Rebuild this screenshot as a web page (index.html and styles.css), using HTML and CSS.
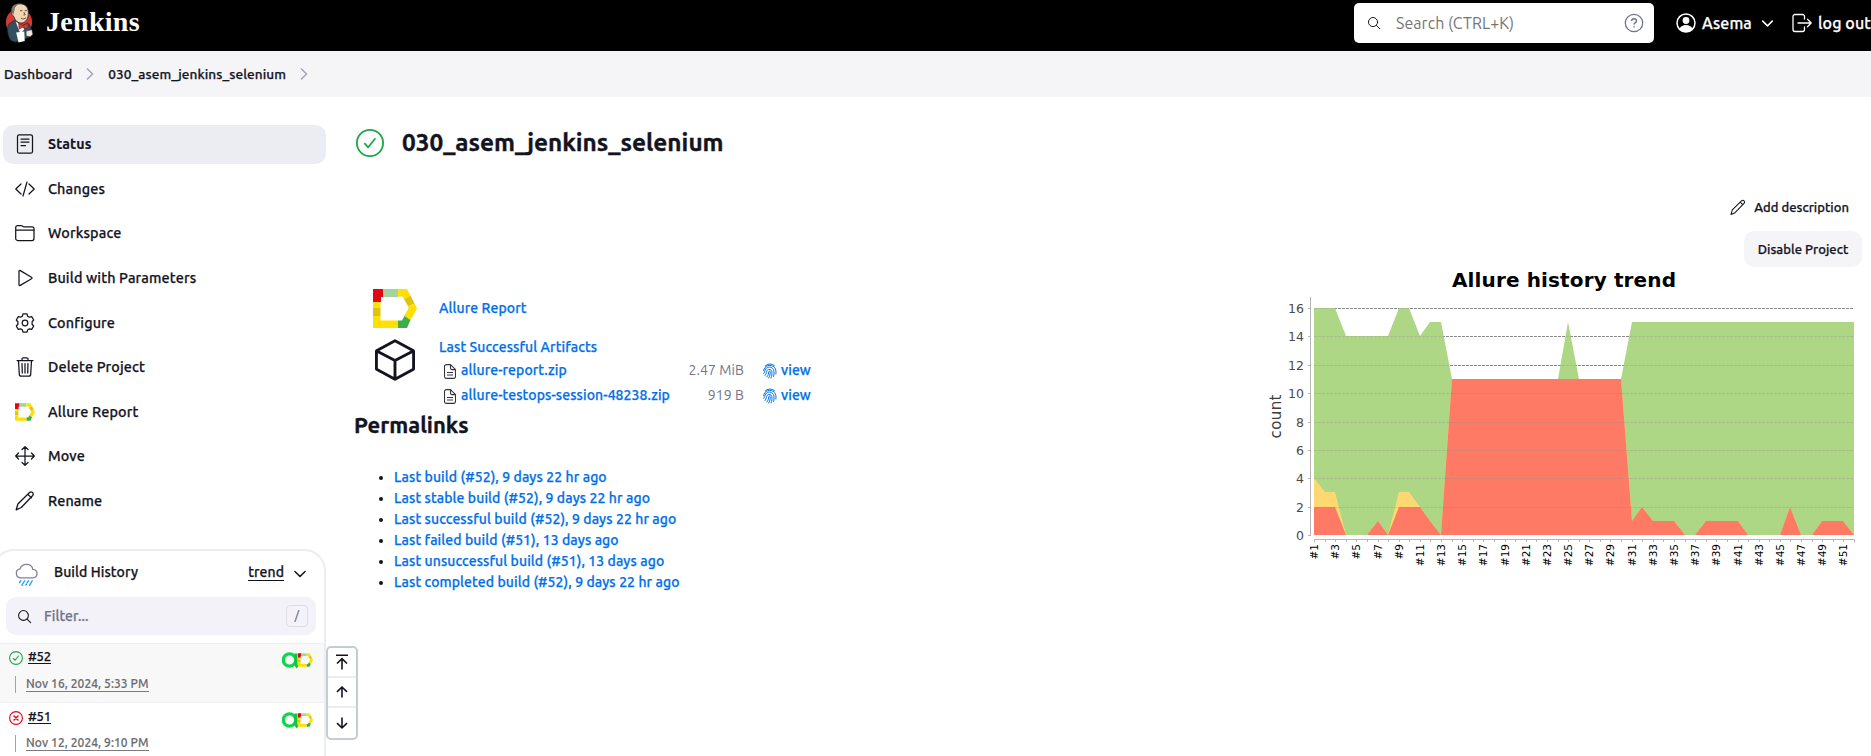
FILE: index.html
```html
<!DOCTYPE html>
<html lang="en">
<head>
<meta charset="utf-8">
<title>030_asem_jenkins_selenium [Jenkins]</title>
<link rel="stylesheet" href="styles.css">
</head>
<body>
<svg width="0" height="0" class="defs">
  <defs>
    <symbol id="allure" viewBox="0 0 44 39">
      <path d="M0 0h10v8H8v5H0z" fill="#e30613"/>
      <path d="M10 0h15v8H10z" fill="#a5d3a0"/>
      <path d="M25 0h9l3.500 6.500-6.500 3.500-1.500-2.500H25z" fill="#ffe000"/>
      <path d="M37.500 6.500l4 8-6.300 3L31 10z" fill="#e0c30f"/>
      <path d="M41.500 14.500L44 19.500l-6.500 11.500-6.500-4L35.500 19.500l-.5-2z" fill="#ffe000"/>
      <path d="M37.500 31L34 39H25v-7.500h4l2.500-4.500z" fill="#3fae49"/>
      <path d="M0 13h7.500v6H0z" fill="#ffe000"/>
      <path d="M0 19h7.500v8H0z" fill="#e0c30f"/>
      <path d="M0 27h7.500v4.500H25V39H0z" fill="#ffe000"/>
    </symbol>
    <symbol id="search" viewBox="0 0 512 512"><g fill="none" stroke="currentColor" stroke-width="36" stroke-linecap="round"><circle cx="221" cy="221" r="167"/><path d="M344 344l122 122"/></g></symbol>
    <symbol id="chev-down" viewBox="0 0 512 512"><path d="M112 184l144 144 144-144" fill="none" stroke="currentColor" stroke-width="44" stroke-linecap="round" stroke-linejoin="round"/></symbol>
    <symbol id="chev-right" viewBox="0 0 512 512"><path d="M184 112l144 144-144 144" fill="none" stroke="currentColor" stroke-width="44" stroke-linecap="round" stroke-linejoin="round"/></symbol>
    <symbol id="pencil" viewBox="0 0 20 20"><path d="M1.200 18.800l1.700-5.800L14.300 1.800c1-1 2.300-1 3.200-.2s1 2.200 0 3.200L6.300 16.500zM12.800 3.300l3.600 3.600" fill="none" stroke="currentColor" stroke-width="1.300" stroke-linejoin="round"/></symbol>
    <symbol id="doc" viewBox="0 0 12 15"><path d="M2.500.6h4l5 5v6.800a2 2 0 0 1-2 2h-7a2 2 0 0 1-2-2V2.600a2 2 0 0 1 2-2zM6.500.6v3.500a1.500 1.500 0 0 0 1.500 1.500h3.400M3 8.500h6M3 11h6" fill="none" stroke="#33333f" stroke-width="1.100" stroke-linejoin="round"/></symbol>
    <symbol id="finger" viewBox="0 0 14 16"><path d="M2.200 3A6.400 6.400 0 0 1 11.600 2.800M.6 7.800C.8 2.400 8 .6 11.500 4.400c1.600 2 1.600 4 1.400 6.600M.8 10.500C2 9 1.500 7.700 2.600 6c2-2.900 6.400-2.300 7.800.5 1 2.200.7 4.700.2 7M2 12.500C3.800 10.700 3 8.500 4.300 7.200c1.500-1.500 4-.8 4.500 1.300.5 2.200 0 4.500-.8 6.500M3.800 14c1.800-2 1.600-3.500 2-5.300.4-1 1.400-.6 1.400.3.100 2.200-.4 4.200-1.500 6" fill="none" stroke="#0070e8" stroke-width="1" stroke-linecap="round"/></symbol>
    <symbol id="ops" viewBox="0 0 16 17"><circle cx="7.500" cy="8" r="6.200" fill="none" stroke="#0bd94c" stroke-width="3.200"/><path d="M14 1.500v10c0 2 .5 3 1.500 3.800" fill="none" stroke="#11c244" stroke-width="3"/></symbol>
  </defs>
</svg>

<header class="top">
  <a class="brand">
    <svg class="butler" viewBox="0 0 30 42">
      <circle cx="14.500" cy="20" r="13.800" fill="#d33833"/>
      <path d="M4 22l6-4 7 6 7-3 3 5v9l-5 2-11 4-5-1.500C2.500 34 1.500 27 4 22z" fill="#335061" stroke="#1d2f3a" stroke-width=".8"/>
      <path d="M6.500 9C6.500 3 10 .8 15.500.8c5.500.2 8.800 3.500 8.800 9.200 0 6-2 10-6.500 11-4.500.5-7.500-2.500-8.800-7-1.500-.5-2.500-2.500-2.500-5z" fill="#f0d6b7" stroke="#3b332c" stroke-width="1"/>
      <path d="M7 9.500C6.500 4 10 .8 15 1c-4 1.800-5 3.500-5.200 6.500L8.500 12.500z" fill="#77756e"/>
      <path d="M15.500 8h2.500M20.500 8h2.500M16.500 16c2 1 4 .8 5.500-.5M19.500 9.500l1.500 3h-2" stroke="#5b3a2a" fill="none" stroke-width=".9"/>
      <path d="M11 19.500l6 4 3 4-4 5z" fill="#fff"/>
      <path d="M14 21.500l4.500 2 5-2 .5 5.500-5.500-1.500-4 2z" fill="#d33833" stroke="#7d1c1a" stroke-width=".5"/>
      <path d="M22 29.500l6-1.500 1 5-3 2.500-4-1z" fill="#f3e6d8" stroke="#3b332c" stroke-width=".5"/>
      <path d="M11.500 31l8.500-1 .5 10-6.500 1.500z" fill="#fff"/>
    </svg>
    <span class="word">Jenkins</span>
  </a>
  <div class="tools">
    <div class="search">
      <svg class="s-ico"><use href="#search"/></svg>
      <span class="s-text">Search (CTRL+K)</span>
      <svg class="help" viewBox="0 0 20 20" fill="none" stroke="#73738c"><circle cx="10" cy="10" r="8.700" stroke-width="1.300"/><path d="M7.600 8C7.700 6.600 8.700 5.800 10 5.800s2.500.9 2.500 2.100c0 1.700-2.400 1.800-2.400 3.500" stroke-width="1.500"/><circle cx="10.100" cy="13.900" r=".4"/></svg>
    </div>
    <a class="user">
      <svg class="ico20" viewBox="0 0 20 20"><circle cx="10" cy="10" r="9" fill="none" stroke="#fff" stroke-width="1.500"/><circle cx="10" cy="7.500" r="3.400" fill="#fff"/><path d="M3.500 16c1-3 3.700-4 6.500-4s5.500 1 6.500 4c-1.500 2-4 3-6.500 3s-5-1-6.500-3z" fill="#fff"/></svg>
      <span class="t-user">Asema</span>
      <svg class="u-chev"><use href="#chev-down"/></svg>
    </a>
    <a class="logout">
      <svg class="ico20" viewBox="0 0 20 20" fill="none" stroke="#fff" stroke-width="1.300" stroke-linecap="round" stroke-linejoin="round"><path d="M12.500 6V3.500a2 2 0 0 0-2-2h-7.500a2 2 0 0 0-2 2v13a2 2 0 0 0 2 2h7.500a2 2 0 0 0 2-2V14M6 10h13M15.500 6.300L19.200 10l-3.700 3.700"/></svg>
      <span class="t-logout">log out</span>
    </a>
  </div>
</header>

<nav class="crumbs">
  <a>Dashboard</a>
  <svg class="c-chev"><use href="#chev-right"/></svg>
  <a>030_asem_jenkins_selenium</a>
  <svg class="c-chev"><use href="#chev-right"/></svg>
</nav>

<div class="page">
  <aside class="side">
    <ul class="tasks">
      <li class="active"><svg viewBox="0 0 20 20"><rect x="2.500" y=".8" width="15" height="18.400" rx="1.800"/><path d="M6 5h8M6 8h8M6 11.500h4.500"/></svg><span>Status</span></li>
      <li><svg viewBox="0 0 20 20"><path d="M6 5L.8 10 6 15M14 5l5.200 5-5.200 5M12 3L8 17"/></svg><span>Changes</span></li>
      <li><svg viewBox="0 0 20 20"><path d="M.7 7V4.500a2 2 0 0 1 2-2h3.500c1 0 1.500 1.300 2.800 1.300h8a2 2 0 0 1 2 2V15.500a2 2 0 0 1-2 2H2.700a2 2 0 0 1-2-2V7.200h18.500"/></svg><span>Workspace</span></li>
      <li><svg viewBox="0 0 20 20"><path d="M4 3.300v13.400c0 .8.600 1.100 1.300.7l11.200-6.600c.7-.4.700-1.200 0-1.600L5.300 2.600C4.600 2.200 4 2.500 4 3.300z"/></svg><span>Build with Parameters</span></li>
      <li><svg viewBox="0 0 20 20"><circle cx="10" cy="10" r="2.800"/><path d="M8 .9h4l.7 2.300 1.700 1 2.300-.6 2 3.400-1.600 1.700v2.600l1.600 1.700-2 3.400-2.300-.6-1.700 1-.7 2.300H8l-.7-2.300-1.700-1-2.300.6-2-3.400 1.600-1.700V8.700L1.300 7l2-3.400 2.300.6 1.700-1z"/></svg><span>Configure</span></li>
      <li><svg viewBox="0 0 20 20"><path d="M2 3.500h16M7 3.300V2A1.200 1.200 0 0 1 8.200.8h3.600A1.200 1.200 0 0 1 13 2v1.300M3.500 3.700l.8 13.500a2 2 0 0 0 2 2h7.400a2 2 0 0 0 2-2l.8-13.500M7 6.500l.3 9.500M10 6.500V16M13 6.500l-.3 9.500"/></svg><span>Delete Project</span></li>
      <li><svg class="al"><use href="#allure"/></svg><span>Allure Report</span></li>
      <li><svg viewBox="0 0 20 20"><path d="M10 .8v18.400M.8 10h18.400M7 3.500l3-2.800 3 2.800M7 16.500l3 2.800 3-2.800M3.500 7L.7 10l2.800 3M16.500 7l2.800 3-2.800 3"/></svg><span>Move</span></li>
      <li><svg><use href="#pencil"/></svg><span>Rename</span></li>
    </ul>

    <section class="history">
      <div class="h-head">
        <svg class="cloud" viewBox="0 0 24 24" fill="none" stroke-linecap="round"><path d="M6 15a4.700 4.700 0 0 1-.8-9.300C6.300 2.500 9 .9 12 .9s6 1.900 6.600 5.200c2.700.3 4.400 2 4.400 4.400 0 2.700-2 4.500-4.700 4.500z" stroke="#82829a" stroke-width="1.400"/><path d="M6 18l-1.300 2M10 18l-2.800 4.800M14 18l-1.300 2M12 21.500l-.6 1M18 18l-2.800 4.800" stroke="#2fa5e8" stroke-width="1.500"/></svg>
        <span class="h-title">Build History</span>
        <a class="trend">trend</a>
        <svg class="h-chev"><use href="#chev-down"/></svg>
      </div>
      <div class="filter"><svg class="f-ico"><use href="#search"/></svg><span class="f-text">Filter...</span><kbd>/</kbd></div>
      <div class="build shaded">
        <div class="b-row">
          <svg class="st" viewBox="0 0 14 14" fill="none" stroke="#1ea64b" stroke-linecap="round"><circle cx="7" cy="7" r="6.400" stroke-width="1.100"/><path d="M4.300 7.500l1.700 1.700 3.500-4.200" stroke-width="1.100"/></svg>
          <a class="num">#52</a><svg class="ops"><use href="#ops"/></svg><svg class="al2"><use href="#allure"/></svg>
        </div>
        <div class="b-date"><a>Nov 16, 2024, 5:33 PM</a></div>
      </div>
      <div class="build">
        <div class="b-row">
          <svg class="st" viewBox="0 0 14 14" fill="none" stroke="#e6001f" stroke-linecap="round"><circle cx="7" cy="7" r="6.400" stroke-width="1.100"/><path d="M5 5l4 4M9 5L5 9" stroke-width="1.500"/></svg>
          <a class="num">#51</a><svg class="ops"><use href="#ops"/></svg><svg class="al2"><use href="#allure"/></svg>
        </div>
        <div class="b-date"><a>Nov 12, 2024, 9:10 PM</a></div>
      </div>
      <div class="pager">
        <span><svg viewBox="0 0 14 16"><path d="M1 1.200h12M7 15.500V4.800M2 9.500l5-4.800 5 4.800"/></svg></span>
        <span><svg viewBox="0 0 14 16"><path d="M7 13.500V3M2 7.800L7 3l5 4.800"/></svg></span>
        <span><svg viewBox="0 0 14 16"><path d="M7 2.500V13M2 8.200L7 13l5-4.800"/></svg></span>
      </div>
    </section>
  </aside>

  <main class="main">
    <div class="heading">
      <svg viewBox="0 0 28 28" fill="none" stroke="#1ea64b" stroke-linecap="round" stroke-linejoin="round"><circle cx="14" cy="14" r="13.100" stroke-width="1.800"/><path d="M8.800 14.600l3.300 3.800 6.900-8.600" stroke-width="1.700"/></svg>
      <h1>030_asem_jenkins_selenium</h1>
    </div>
    <div class="cols">
      <div class="info">
        <div class="rep"><svg class="al3"><use href="#allure"/></svg><a>Allure Report</a></div>
        <div class="arts">
          <svg class="box" viewBox="0 0 40 42" fill="none" stroke="#14141f" stroke-linejoin="round"><path d="M20 1.700l18 9.800c.4.300.6.700.6 1.200v16.600c0 .5-.2.900-.6 1.200L20 40.300 2 30.500c-.4-.3-.6-.7-.6-1.200V12.700c0-.5.2-.9.600-1.200zM1.700 12L20 21.500 38.300 12M20 21.500v18.500" stroke-width="2.900"/></svg>
          <div class="a-body">
            <a class="last">Last Successful Artifacts</a>
            <div class="file"><svg class="doc"><use href="#doc"/></svg><a class="name">allure-report.zip</a><span class="size">2.47 MiB</span><svg class="fp"><use href="#finger"/></svg><a>view</a></div>
            <div class="file"><svg class="doc"><use href="#doc"/></svg><a class="name">allure-testops-session-48238.zip</a><span class="size">919 B</span><svg class="fp"><use href="#finger"/></svg><a>view</a></div>
          </div>
        </div>
        <h2>Permalinks</h2>
        <ul class="perma">
          <li><a>Last build (#52), 9 days 22 hr ago</a></li>
          <li><a>Last stable build (#52), 9 days 22 hr ago</a></li>
          <li><a>Last successful build (#52), 9 days 22 hr ago</a></li>
          <li><a>Last failed build (#51), 13 days ago</a></li>
          <li><a>Last unsuccessful build (#51), 13 days ago</a></li>
          <li><a>Last completed build (#52), 9 days 22 hr ago</a></li>
        </ul>
      </div>
      <div class="right">
        <a class="adddesc"><svg><use href="#pencil"/></svg><span>Add description</span></a>
        <button class="disable">Disable Project</button>
        <svg id="chart" class="chart" viewBox="1260 266 600 310"></svg>
      </div>
    </div>
  </main>
</div>
<script src="chart.js"></script>
</body>
</html>
```
FILE: styles.css
```css
* { box-sizing: border-box; }
body {
  margin: 0;
  height: 756px;
  overflow: hidden;
  background: #fff;
  color: #14141f;
  font: 500 14px/20px Ubuntu, "Noto Sans", sans-serif;
  letter-spacing: .09px;
  -webkit-text-stroke: .25px currentColor;
}
a { color: inherit; text-decoration: none; }
span, a, h1, h2 { white-space: nowrap; }
svg { flex: none; display: block; }
.defs { display: none; }
ul { list-style: none; margin: 0; padding: 0; }

.top { height: 51px; background: #000; display: flex; justify-content: space-between; overflow: hidden; }
.brand { display: flex; padding: 3px 0 0 5px; gap: 12px; }
.butler { width: 29px; height: 40px; }
.word { color: #fff; font: bold 28px/38px "Liberation Serif", serif; letter-spacing: .3px; -webkit-text-stroke: 0; }
.tools { display: flex; align-items: center; width: 517px; height: 46px; color: #fff; font-size: 16px; }
.search { width: 300px; height: 40px; margin-right: 22px; background: #fff; border-radius: 5px; display: flex; align-items: center; padding: 0 10px 0 13px; color: #14141f; flex: none; }
.s-ico { width: 14px; height: 14px; margin-right: 15px; }
.s-text { font-weight: 400; color: #757575; flex: 1; letter-spacing: .05px; -webkit-text-stroke: 0; }
.help { width: 20px; height: 20px; }
.ico20 { width: 20px; height: 20px; }
.user, .logout { display: flex; align-items: center; flex: none; }
.user { width: 116px; }
.t-user, .t-logout { margin-left: 6px; }
.u-chev { width: 17px; height: 17px; margin-left: 7px; }

.crumbs { height: 46px; background: #f5f5f8; display: flex; align-items: center; padding-left: 4px; font-size: 13.600px; }
.c-chev { width: 18px; height: 18px; color: #a5a5b8; margin: 0 9px; }

.page { display: flex; }
.side { width: 326px; flex: none; padding-top: 28px; }
.tasks { padding-left: 3px; font-size: 14.400px; letter-spacing: .13px; }
.tasks li { height: 38.600px; margin-bottom: 6px; display: flex; align-items: center; padding-left: 12px; border-radius: 10px; }
.tasks .active { background: #ecedf3; font-weight: 700; font-size: 14.200px; -webkit-text-stroke-width: .15px; }
.tasks svg { width: 20px; height: 20px; margin-right: 13px; fill: none; stroke: #14141f; stroke-width: 1.250; stroke-linecap: round; stroke-linejoin: round; }
.tasks .al { height: 18px; stroke: none; }

.history { position: relative; height: 240px; margin: 29px 0 0 -8px; border: 2px solid #ecedf3; border-radius: 22px 22px 0 0; width: 334px; padding-left: 6px; }
.h-head { height: 46px; display: flex; align-items: center; padding: 0 15px 4px 15px; }
.cloud { width: 23px; height: 24px; margin-top: 5px; }
.h-title { margin-left: 16px; flex: 1; }
.trend { border-bottom: 1px solid #14141f; line-height: 16px; margin-top: 1px; }
.h-chev { width: 18px; height: 18px; margin: 4px 0 0 7px; }
.filter { margin: 0 8px 0 6px; height: 38px; border-radius: 10px; background: #f2f2f8; display: flex; align-items: center; padding: 0 8px 0 11px; color: #73738c; }
.f-ico { width: 15px; height: 15px; color: #14141f; margin-right: 12px; }
.f-text { flex: 1; }
kbd { width: 22px; height: 22px; border: 1px solid #dcdce6; border-radius: 4px; font: 500 12px/20px Ubuntu, "Noto Sans", sans-serif; text-align: center; -webkit-text-stroke: 0; }
.build { height: 59px; padding: 8px 11px 0 9px; }
.shaded { background: #f8f8f8; border-top: 1px solid #efeff4; border-bottom: 1px solid #efeff4; margin-top: 8px; height: 60px; padding-top: 7px; }
.b-row { display: flex; align-items: flex-start; height: 25px; }
.build:not(.shaded) .b-row { height: 24px; }
.st { width: 14px; height: 14px; }
.num { margin: -1px auto 0 5px; font-size: 13px; line-height: 13px; height: 14px; border-bottom: 1px solid #14141f; letter-spacing: -.1px; }
.ops { width: 16px; height: 17px; margin-top: 1px; }
.al2 { width: 15px; height: 14px; margin-top: 2px; }
.b-date { border-left: 1px solid #9aa5ae; height: 17px; margin-left: 6px; padding-left: 10px; font-size: 12px; color: #6b6b70; -webkit-text-stroke-width: .15px; }
.b-date a { display: inline-block; line-height: 15px; height: 16px; border-bottom: 1px solid #7b7b80; vertical-align: top; }
.pager { position: absolute; left: 332px; top: 95px; width: 32px; height: 94px; border: 2px solid #c4cdd2; border-radius: 5px; background: #fff; }
.pager span { display: flex; height: 30px; align-items: center; justify-content: center; border-bottom: 2px solid #ecedf3; }
.pager span:last-child { border: 0; }
.pager svg { width: 14px; height: 16px; fill: none; stroke: #14141f; stroke-width: 1.600; }

.main { flex: 1; padding: 31px 0 0 28px; min-width: 0; }
.heading { display: flex; align-items: center; gap: 18px; height: 30px; }
.heading svg { width: 28px; height: 28px; margin-left: 2px; }
h1, h2 { margin: 0; font-weight: 700; letter-spacing: 0; -webkit-text-stroke: .35px currentColor; }
h1 { font-size: 24.350px; line-height: 28px; margin-top: -2px; }
h2 { font-size: 22px; line-height: 28px; margin-top: 4px; color: #14141f; }
.cols { display: flex; justify-content: space-between; }
.info { padding-top: 131px; color: #0070e8; }
.rep { display: flex; align-items: center; height: 39px; padding-left: 19px; gap: 22px; }
.rep a { margin-top: -2px; }
.al3 { width: 44px; height: 39px; }
.arts { display: flex; padding-left: 21px; margin-top: 9px; }
.box { width: 40px; height: 42px; margin: 2px 24px 0 0; }
.a-body { height: 70px; }
.last { display: block; height: 20px; }
.file { display: flex; align-items: center; height: 25px; }
.doc { width: 12px; height: 15px; margin: 4px 5px 0 5px; }
.name { width: 215px; }
.size { width: 68px; text-align: right; color: #73738c; font-weight: 400; -webkit-text-stroke: 0; }
.fp { width: 14px; height: 16px; margin: 2px 4px 0 19px; }
.perma { margin-top: 28px; padding-left: 40px; list-style: disc; }
.perma li { height: 21px; line-height: 21px; }
.perma li::marker { color: #14141f; }
.right { width: 611px; display: flex; flex-direction: column; align-items: flex-end; padding: 37px 9px 0 0; font-size: 13px; letter-spacing: .04px; }
.adddesc { display: flex; align-items: center; height: 24px; padding-right: 13px; gap: 8px; }
.adddesc svg { width: 16px; height: 17px; }
.disable { border: 0; width: 118px; height: 36px; border-radius: 10px; background: #f5f5f8; color: inherit; font: inherit; letter-spacing: inherit; margin: 12px 0 -1px; padding: 0; }
.chart { width: 600px; height: 310px; margin: 0 2px 0 0; -webkit-text-stroke: 0; letter-spacing: 0; }
.chart text { font-family: "DejaVu Sans", sans-serif; font-weight: 400; fill: #404040; }
.chart .ttl { font: bold 20px "DejaVu Sans", sans-serif; fill: #000; text-anchor: middle; }
.chart .yl { font-size: 12.500px; text-anchor: end; fill: #4a4a4a; }
.chart .xl { font-size: 10.500px; text-anchor: end; fill: #000; }
.chart .cl { font-size: 15px; text-anchor: middle; }
```
FILE: chart.js
```js
const failed = [2,2,2,0,0,0,1,0,2,2,2,1,0,...Array(17).fill(11),1,2,1,1,1,0,0,1,1,1,1,0,0,0,0,2,0,0,1,1,1,0];
const broken = [4,3,3,0,0,0,1,0,3,3,2,1,0,...failed.slice(13)];
const total = [16,16,16,14,14,14,14,14,16,16,14,15,15,...Array(11).fill(11),15,...Array(5).fill(11),...Array(22).fill(15)];
const X = i => Math.round(1314 + i * 540 / 51);
const Y = v => Math.round(535 - v * 227 / 16);
const poly = (d, fill) => `<polygon fill="${fill}" points="${X(0)},535 ${d.map((v, i) => X(i) + ',' + Y(v)).join(' ')} ${X(51)},535"/>`;
let s = '<text class="ttl" x="1564" y="287" textLength="224">Allure history trend</text>';
s += '<text class="cl" transform="translate(1281 416.500) rotate(-90)" textLength="44">count</text>';
let grid = '';
for (let v = 2; v <= 16; v += 2) grid += `<path d="M1314 ${Y(v) + .5}H1853" stroke="#888" stroke-dasharray="3 1"/>`;
s += grid + poly(total, '#aed785') + poly(broken, '#ffd872') + poly(failed, '#ff7a64') + `<g opacity=".3">${grid}</g>`;
s += '<path d="M1310.500 297V536M1314 539.500H1855" stroke="#b5b5b5" fill="none"/>';
for (let v = 0; v <= 16; v += 2) s += `<path d="M1308 ${Y(v) + .5}h2.500" stroke="#b5b5b5"/><text class="yl" x="1304" y="${Y(v) + 4.5}">${v}</text>`;
for (let i = 0; i < 52; i++) {
  s += `<path d="M${X(i) + .5} 540v2" stroke="#b5b5b5"/>`;
  if (i % 2 === 0) s += `<text class="xl" transform="translate(${X(i) + 4} 544) rotate(-90)">#${i + 1}</text>`;
}
document.getElementById('chart').innerHTML = s;
```
